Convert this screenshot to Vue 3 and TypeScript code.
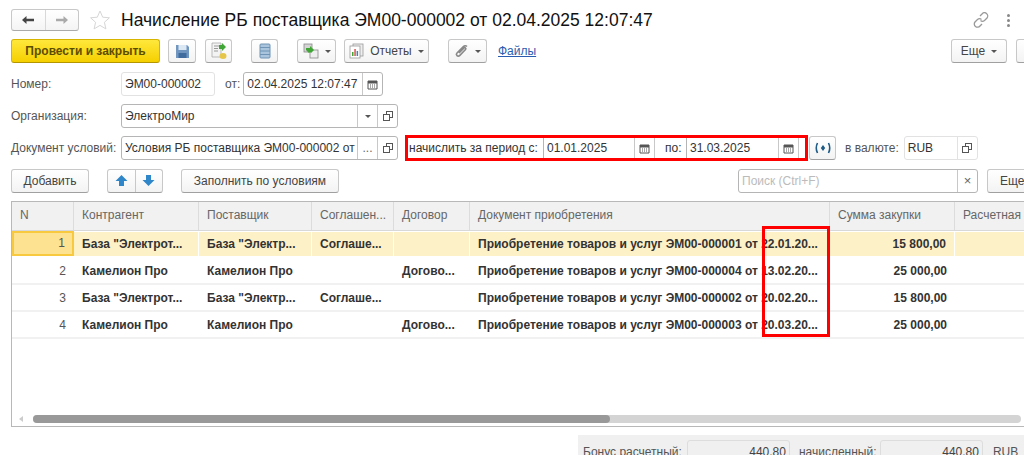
<script setup lang="ts">
interface Row {
  n: number;
  partner: string;
  supplier: string;
  agreement: string;
  contract: string;
  doc: string;
  sum: string;
}

const columns = ["Контрагент", "Поставщик", "Соглашен...", "Договор", "Документ приобретения", "Сумма закупки", "Расчетная"];

const rows: Row[] = [
  { n: 1, partner: 'База "Электрот...', supplier: 'База "Электр...', agreement: "Соглаше...", contract: "", doc: "Приобретение товаров и услуг ЭМ00-000001 от 22.01.20...", sum: "15 800,00" },
  { n: 2, partner: "Камелион Про", supplier: "Камелион Про", agreement: "", contract: "Догово...", doc: "Приобретение товаров и услуг ЭМ00-000004 от 13.02.20...", sum: "25 000,00" },
  { n: 3, partner: 'База "Электрот...', supplier: 'База "Электр...', agreement: "Соглаше...", contract: "", doc: "Приобретение товаров и услуг ЭМ00-000002 от 20.02.20...", sum: "15 800,00" },
  { n: 4, partner: "Камелион Про", supplier: "Камелион Про", agreement: "", contract: "Догово...", doc: "Приобретение товаров и услуг ЭМ00-000003 от 20.03.20...", sum: "25 000,00" },
];
</script>

<template>
  <div class="page">
    <div class="title-row">
      <div class="nav-group">
        <span class="nav-btn">
          <svg width="14" height="10" viewBox="0 0 14 10"><path d="M1 5l4.500-4v2.800H13v2.400H5.500V9z" fill="#444" /></svg>
        </span>
        <span class="nav-btn">
          <svg width="14" height="10" viewBox="0 0 14 10"><path d="M13 5L8.500 1v2.800H1v2.400h7.500V9z" fill="#aaa" /></svg>
        </span>
      </div>
      <svg class="star" width="22" height="22" viewBox="0 0 22 22"><path d="M11 2l2.700 6.200 6.700.6-5 4.500 1.500 6.600L11 16.400l-5.900 3.500 1.500-6.600-5-4.500 6.700-.6z" fill="#fff" stroke="#d6d6d6" /></svg>
      <h1 class="title">Начисление РБ поставщика ЭМ00-000002 от 02.04.2025 12:07:47</h1>
      <div class="title-tools">
        <svg width="16" height="16" viewBox="0 0 16 16" fill="none" stroke="#999" stroke-width="1.300"><path d="M7 4l2-2a3 3 0 0 1 5 4l-2.500 2.500a3 3 0 0 1-4 0" /><path d="M9 12l-2 2a3 3 0 0 1-5-4l2.500-2.500a3 3 0 0 1 4 0" /></svg>
        <span class="kebab"><i></i><i></i><i></i></span>
      </div>
    </div>

    <div class="row cmd-row">
      <button class="btn primary">Провести и закрыть</button>
      <button class="btn icon w28 ml8">
        <svg width="15" height="15" viewBox="0 0 15 15"><path d="M1 1h11l2 2v11H1z" fill="#7096c0" /><rect x="3.500" y="1" width="8" height="5" fill="#dbe7f3" /><rect x="3.500" y="9" width="8" height="5" fill="#3f6c9c" /></svg>
      </button>
      <button class="btn icon w27 ml9">
        <svg width="18" height="18" viewBox="0 0 18 18"><path d="M2 1h9v14H2z" fill="#f3f3f3" stroke="#aaa" stroke-width=".8" /><path d="M4 4h5M4 6.500h4M4 9h4" stroke="#999" /><ellipse cx="13" cy="14" rx="3.500" ry="3" fill="#e6c64a" /><path d="M9 3h3V1l4 4-4 4V7H9z" fill="#3fa535" /></svg>
      </button>
      <button class="btn icon w27 ml19">
        <svg width="12" height="16" viewBox="0 0 12 16"><rect x="1" y="1" width="10" height="14" rx="1" fill="#a9c4dc" stroke="#6f94b5" /><path d="M1 4.500h10M1 8h10M1 11.500h10" stroke="#6f94b5" /></svg>
      </button>
      <button class="btn icon w39 ml19">
        <svg width="17" height="16" viewBox="0 0 17 16"><rect x="1" y="1" width="8" height="8" fill="#d5d5d5" stroke="#888" stroke-width=".8" /><rect x="7" y="7" width="8" height="8" fill="#eee" stroke="#888" stroke-width=".8" /><path d="M3 5h4V3l4 4-3 3-1-1-1 1-3-3z" fill="#3fa535" /></svg>
        <i class="caret"></i>
      </button>
      <button class="btn icon w85 ml8">
        <svg width="15" height="16" viewBox="0 0 15 16"><rect x="4" y="1" width="10" height="12" fill="#eee" stroke="#999" stroke-width=".8" /><rect x="1" y="3" width="10" height="12" fill="#fff" stroke="#999" stroke-width=".8" /><rect x="3" y="9" width="1.500" height="4" fill="#3fa535" /><rect x="5.300" y="6" width="1.500" height="7" fill="#d9534f" /><rect x="7.600" y="8" width="1.500" height="5" fill="#4a7fb5" /></svg>
        <span class="btn-label">Отчеты</span>
        <i class="caret"></i>
      </button>
      <button class="btn icon w39 ml19">
        <svg width="16" height="16" viewBox="0 0 16 16" fill="none" stroke="#888" stroke-width="1.600"><path d="M13 3.500a2.500 2.500 0 0 0-3.600 0L3 10a1.800 1.800 0 0 0 2.600 2.600L11.500 6.500a1 1 0 0 0-1.500-1.500L5 10" /></svg>
        <i class="caret"></i>
      </button>
      <a class="files" href="#">Файлы</a>
      <span class="spacer"></span>
      <button class="btn more">Еще <i class="caret"></i></button>
      <button class="btn clipped"></button>
    </div>

    <div class="row field-row first">
      <label class="lbl">Номер:</label>
      <div class="field readonly w94"><span class="val">ЭМ00-000002</span></div>
      <span class="lbl-inline ot">от:</span>
      <div class="field w140">
        <span class="val">02.04.2025 12:07:47</span>
        <span class="addon">
          <svg class="cal" width="11" height="11" viewBox="0 0 11 11"><path d="M1 2h9v8H1z" fill="none" stroke="#555" /><path d="M1 2h9v2.500H1z" fill="#555" /><path d="M3 6h1M5 6h1M7 6h1M3 8h1M5 8h1M7 8h1" stroke="#555" /></svg>
        </span>
      </div>
    </div>

    <div class="row field-row">
      <label class="lbl">Организация:</label>
      <div class="field w277">
        <span class="val">ЭлектроМир</span>
        <span class="addon"><i class="caret"></i></span>
        <span class="addon">
          <svg width="10" height="10" viewBox="0 0 10 10" fill="#fff" stroke="#555"><rect x="3.500" y=".5" width="6" height="6" /><rect x=".5" y="3.500" width="6" height="6" /></svg>
        </span>
      </div>
    </div>

    <div class="row field-row">
      <label class="lbl">Документ условий:</label>
      <div class="field w277">
        <span class="val">Условия РБ поставщика ЭМ00-000002 от</span>
        <span class="addon dots">...</span>
        <span class="addon">
          <svg width="10" height="10" viewBox="0 0 10 10" fill="#fff" stroke="#555"><rect x="3.500" y=".5" width="6" height="6" /><rect x=".5" y="3.500" width="6" height="6" /></svg>
        </span>
      </div>
      <div class="period">
        <span class="period-lbl">начислить за период с:</span>
        <div class="period-field first-date">
          <span class="val">01.01.2025</span>
          <span class="addon addon20">
            <svg width="11" height="11" viewBox="0 0 11 11"><path d="M1 2h9v8H1z" fill="none" stroke="#555" /><path d="M1 2h9v2.500H1z" fill="#555" /><path d="M3 6h1M5 6h1M7 6h1M3 8h1M5 8h1M7 8h1" stroke="#555" /></svg>
          </span>
        </div>
        <span class="period-lbl po">по:</span>
        <div class="period-field second-date">
          <span class="val">31.03.2025</span>
          <span class="addon addon20">
            <svg width="11" height="11" viewBox="0 0 11 11"><path d="M1 2h9v8H1z" fill="none" stroke="#555" /><path d="M1 2h9v2.500H1z" fill="#555" /><path d="M3 6h1M5 6h1M7 6h1M3 8h1M5 8h1M7 8h1" stroke="#555" /></svg>
          </span>
        </div>
      </div>
      <button class="btn icon w27 period-btn">
        <svg width="18" height="12" viewBox="0 0 18 12" fill="none" stroke="#1d5a86" stroke-width="1.600"><path d="M3.500 1Q1 6 3.500 11M14.500 1q2.500 5 0 10" /><path d="M9 3L6.800 6 9 9l2.200-3z" fill="#1d5a86" stroke="none" /></svg>
      </button>
      <span class="lbl-inline currency">в валюте:</span>
      <div class="field readonly w74">
        <span class="val">RUB</span>
        <span class="addon">
          <svg width="10" height="10" viewBox="0 0 10 10" fill="#fff" stroke="#555"><rect x="3.500" y=".5" width="6" height="6" /><rect x=".5" y="3.500" width="6" height="6" /></svg>
        </span>
      </div>
    </div>

    <div class="row tool-row">
      <button class="btn w78">Добавить</button>
      <div class="arrows">
        <span class="arrow-btn">
          <svg width="13" height="13" viewBox="0 0 13 13"><path d="M6.500 1l6 6H9v5H4V7H.5z" fill="#2f86c9" /></svg>
        </span>
        <span class="arrow-btn">
          <svg width="13" height="13" viewBox="0 0 13 13"><path d="M6.500 12l6-6H9V1H4v5H.5z" fill="#2f86c9" /></svg>
        </span>
      </div>
      <button class="btn w158">Заполнить по условиям</button>
      <span class="spacer"></span>
      <div class="field w240 search">
        <span class="val placeholder">Поиск (Ctrl+F)</span>
        <span class="addon clear">×</span>
      </div>
      <button class="btn more-clipped">Еще</button>
    </div>

    <div class="table">
      <div class="grid head">
        <div class="cell n-head">N</div>
        <div v-for="c in columns" :key="c" class="cell">{{ c }}</div>
      </div>
      <div class="body">
        <div v-for="r in rows" :key="r.n" class="grid item" :class="{ selected: r.n === 1 }">
          <div class="cell num">{{ r.n }}</div>
          <div class="cell">{{ r.partner }}</div>
          <div class="cell">{{ r.supplier }}</div>
          <div class="cell">{{ r.agreement }}</div>
          <div class="cell">{{ r.contract }}</div>
          <div class="cell">{{ r.doc }}</div>
          <div class="cell sum">{{ r.sum }}</div>
          <div class="cell"></div>
        </div>
        <div class="mark"></div>
      </div>
      <div class="hscroll">
        <i class="scroll-left"></i>
        <div class="track"><div class="thumb"></div></div>
      </div>
    </div>

    <div class="totals">
      <span>Бонус расчетный:</span>
      <span class="total-val">440,80</span>
      <span class="total-lbl">начисленный:</span>
      <span class="total-val">440,80</span>
      <span class="total-cur">RUB</span>
    </div>
  </div>
</template>

<style>
html,
body {
  margin: 0;
  background: #fff;
}
</style>

<style scoped>
.page {
  position: relative;
  width: 1024px;
  height: 455px;
  overflow: hidden;
  box-sizing: border-box;
  padding: 0 0 0 11px;
  font-family: "Liberation Sans", Arial, sans-serif;
  font-size: 12px;
  color: #333;
  background: #fff;
}

.title-row {
  display: flex;
  align-items: center;
  height: 26px;
  padding-top: 7px;
}

.nav-group {
  display: flex;
  width: 68px;
  height: 22px;
  box-sizing: border-box;
  border: 1px solid #c8c8c8;
  border-bottom-color: #aaa;
  border-radius: 3px;
  background: linear-gradient(#fff, #f4f4f4);
}

.nav-btn {
  flex: 1;
  display: flex;
  align-items: center;
  justify-content: center;
}

.nav-btn + .nav-btn {
  border-left: 1px solid #d8d8d8;
}

.star {
  margin-left: 10px;
}

.title {
  margin: 0 0 0 10px;
  font-size: 17.5px;
  font-weight: 400;
  color: #111;
  white-space: nowrap;
}

.title-tools {
  display: flex;
  align-items: center;
  margin-left: 320px;
  gap: 18px;
}

.kebab {
  display: flex;
  flex-direction: column;
  gap: 2px;
}

.kebab i {
  display: block;
  width: 3px;
  height: 3px;
  border-radius: 50%;
  background: #888;
}

.row {
  display: flex;
  align-items: center;
  width: 1045px;
}

.cmd-row {
  height: 24px;
  margin-top: 6px;
}

.btn {
  display: flex;
  align-items: center;
  justify-content: center;
  height: 24px;
  box-sizing: border-box;
  padding: 0;
  border: 1px solid #c8c8c8;
  border-bottom-color: #a0a0a0;
  border-radius: 3px;
  background: linear-gradient(#fff, #f3f3f3);
  font: inherit;
  color: #444;
  flex: none;
}

.primary {
  width: 149px;
  border-color: #d6b400;
  border-bottom-color: #b39600;
  background: linear-gradient(#ffe83c, #f5cf00);
  font-weight: 700;
  color: #5b4d00;
}

.w27 { width: 27px; }
.w28 { width: 28px; }
.w39 { width: 39px; gap: 5px; }
.w85 { width: 85px; }
.w78 { width: 78px; }
.w158 { width: 158px; }
.ml8 { margin-left: 8px; }
.ml9 { margin-left: 9px; }
.ml19 { margin-left: 19px; }

.btn-label {
  margin: 0 6px 0 6px;
}

.caret {
  display: inline-block;
  width: 0;
  height: 0;
  border-left: 3px solid transparent;
  border-right: 3px solid transparent;
  border-top: 3px solid #555;
}

.files {
  margin-left: 11px;
  color: #2a5db0;
  text-decoration: underline;
}

.spacer {
  flex: 1;
}

.more {
  width: 56px;
  gap: 6px;
}

.clipped {
  width: 40px;
  margin-left: 9px;
}

.field-row {
  height: 24px;
  margin-top: 8px;
}

.field-row.first {
  margin-top: 9px;
}

.lbl {
  width: 110px;
  color: #555;
  flex: none;
}

.field {
  display: flex;
  align-items: stretch;
  height: 24px;
  box-sizing: border-box;
  border: 1px solid #b5b5b5;
  border-radius: 3px;
  background: #fff;
  flex: none;
}

.field.readonly {
  border-color: #e2e2e2;
}

.w94 { width: 94px; }
.w140 { width: 140px; }
.w277 { width: 277px; }
.w74 { width: 74px; }
.w240 { width: 240px; }

.val {
  flex: 1;
  min-width: 0;
  padding-left: 3px;
  line-height: 22px;
  white-space: nowrap;
  overflow: hidden;
}

.addon {
  display: flex;
  align-items: center;
  justify-content: center;
  width: 19px;
  border-left: 1px solid #c8c8c8;
  flex: none;
}

.readonly .addon {
  border-left-color: #e2e2e2;
}

.dots {
  color: #666;
}

.lbl-inline {
  color: #555;
  flex: none;
}

.ot {
  margin: 0 3px 0 10px;
}

.period {
  display: flex;
  align-items: center;
  width: 403px;
  height: 26px;
  box-sizing: border-box;
  margin-left: 7px;
  border: 3px solid #f00;
  flex: none;
}

.period-lbl {
  margin-left: 1px;
  width: 134px;
  color: #333;
  flex: none;
  white-space: nowrap;
}

.period-field {
  display: flex;
  align-items: stretch;
  height: 20px;
  box-sizing: border-box;
  border-left: 1px solid #b5b5b5;
  flex: none;
}

.first-date { width: 112px; }
.second-date { width: 113px; }

.period-field .val {
  line-height: 20px;
}

.addon20 {
  width: 19px;
  border-right: 1px solid #c8c8c8;
}

.po {
  width: 21px;
  margin-left: 10px;
}

.period-btn {
  margin-left: 1px;
}

.currency {
  margin: 0 5px 0 9px;
}

.tool-row {
  height: 25px;
  margin-top: 8px;
}

.arrows {
  display: flex;
  width: 56px;
  height: 24px;
  box-sizing: border-box;
  margin-left: 18px;
  border: 1px solid #c8c8c8;
  border-bottom-color: #a0a0a0;
  border-radius: 3px;
  background: linear-gradient(#fff, #f3f3f3);
}

.arrow-btn {
  flex: 1;
  display: flex;
  align-items: center;
  justify-content: center;
}

.arrow-btn + .arrow-btn {
  border-left: 1px solid #c8c8c8;
}

.arrows + .btn {
  margin-left: 18px;
}

.search {
  margin-right: 9px;
}

.placeholder {
  color: #bbb;
}

.clear {
  color: #666;
  font-size: 13px;
}

.more-clipped {
  width: 69px;
  justify-content: flex-start;
  padding-left: 12px;
}

.table {
  display: flex;
  flex-direction: column;
  width: 1045px;
  height: 226px;
  box-sizing: border-box;
  margin-top: 8px;
  border: 1px solid #b8b8b8;
}

.grid {
  display: grid;
  grid-template-columns: 62px 125px 113px 82px 76px 360px 125px 100px;
}

.head {
  height: 28px;
  border-bottom: 1px solid #d8d8d8;
}

.head .cell {
  background: #f1f1f1;
  border-right: 1px solid #dcdcdc;
  color: #666;
  line-height: 27px;
}

.n-head {
  padding-left: 8px !important;
}

.cell {
  box-sizing: border-box;
  min-width: 0;
  padding: 0 8px;
  white-space: nowrap;
  overflow: hidden;
}

.body {
  position: relative;
  flex: 1;
}

.item {
  height: 27px;
  box-sizing: border-box;
  border-bottom: 2px solid #f1f1f1;
  font-weight: 700;
  line-height: 26px;
}

.item .num {
  font-weight: 400;
  text-align: right;
  color: #555;
}

.item .sum {
  text-align: right;
}

.selected {
  border-bottom-color: #fff;
}

.selected .cell {
  background: #fdf1c8;
  border-top: 1px solid #fff;
  border-right: 1px solid #fff;
  line-height: 24px;
}

.selected .num {
  background: #fde292;
  border: 2px solid #f8c93f;
  padding-right: 7px;
  line-height: 21px;
}

.mark {
  position: absolute;
  left: 750px;
  top: -5px;
  width: 68px;
  height: 111px;
  box-sizing: border-box;
  border: 3px solid #f00;
}

.hscroll {
  display: flex;
  align-items: center;
  width: 1012px;
  height: 22px;
  box-sizing: border-box;
  padding: 10px 3px 2px 7px;
}

.scroll-left {
  width: 0;
  height: 0;
  margin-right: 10px;
  border-top: 3px solid transparent;
  border-bottom: 3px solid transparent;
  border-right: 4px solid #ccc;
  flex: none;
}

.track {
  flex: 1;
  height: 8px;
  border-radius: 4px;
  background: #d4d4d4;
}

.thumb {
  width: 577px;
  height: 100%;
  border-radius: 4px;
  background: #999;
}

.totals {
  display: flex;
  align-items: center;
  width: 446px;
  height: 34px;
  box-sizing: border-box;
  margin: 8px 0 0 567px;
  padding-left: 5px;
  background: #f0f0f0;
  color: #555;
  white-space: nowrap;
}

.total-val {
  width: 103px;
  height: 24px;
  box-sizing: border-box;
  margin-left: 5px;
  padding-right: 3px;
  border: 1px solid #ddd;
  border-radius: 3px;
  line-height: 22px;
  text-align: right;
  color: #444;
  flex: none;
}

.total-lbl {
  width: 76px;
  margin-left: 9px;
  flex: none;
}

.total-cur {
  margin-left: 10px;
}
</style>
